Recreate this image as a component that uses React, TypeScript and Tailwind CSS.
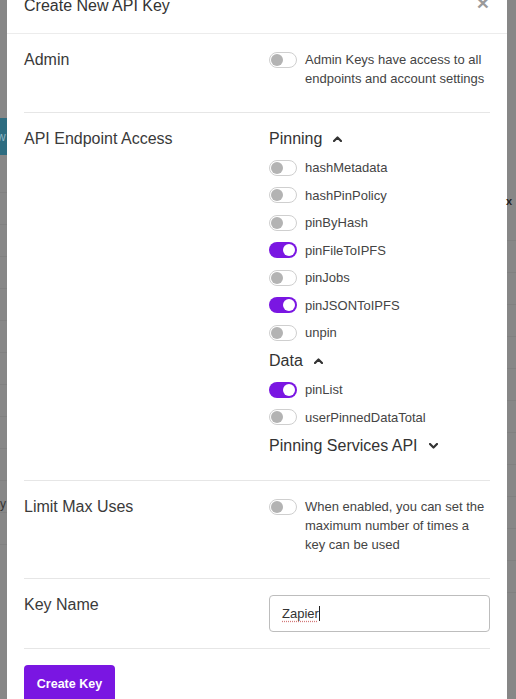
import React from "react";

function Toggle({ on }: { on?: boolean }) {
  return on ? (
    <div className="flex h-[16px] w-[28px] shrink-0 items-center justify-end rounded-full bg-[#7a16e2] pr-[2px]">
      <div className="h-[12px] w-[12px] rounded-full bg-white" />
    </div>
  ) : (
    <div className="flex h-[16px] w-[28px] shrink-0 items-center rounded-full border border-[#cfcfcf] bg-white pl-[1px]">
      <div className="h-[12px] w-[12px] rounded-full bg-[#b3b3b3]" />
    </div>
  );
}

function Chevron({ up }: { up?: boolean }) {
  return (
    <svg width="9" height="6" viewBox="0 0 9 6" className="shrink-0">
      <path
        d={up ? "M1 5 L4.5 1.5 L8 5" : "M1 1 L4.5 4.5 L8 1"}
        fill="none"
        stroke="#333"
        strokeWidth="2.2"
        strokeLinecap="round"
        strokeLinejoin="round"
      />
    </svg>
  );
}

function Heading({ title, up }: { title: string; up?: boolean }) {
  return (
    <div className="flex h-[29.5px] items-center gap-[11px] text-[16px] text-[#333]">
      <span>{title}</span>
      <Chevron up={up} />
    </div>
  );
}

function Item({ name, on }: { name: string; on?: boolean }) {
  return (
    <div className="flex h-[27.5px] items-center gap-[8px] text-[13px] text-[#444]">
      <Toggle on={on} />
      <span>{name}</span>
    </div>
  );
}

function StripLines() {
  return (
    <div className="flex flex-col">
      {Array.from({ length: 12 }).map((_, i) => (
        <div key={i} className="h-[32px] border-b border-[#808080]" />
      ))}
    </div>
  );
}

export default function App() {
  return (
    <div
      className="flex h-[699px] w-[516px] overflow-hidden bg-[#878787]"
      style={{ fontFamily: '"Liberation Sans", Arial, sans-serif' }}
    >
      {/* left backdrop strip */}
      <div className="flex w-[7px] shrink-0 flex-col">
        <div className="h-[118px]" />
        <div className="flex h-[37px] items-center bg-[#2d6c80] text-[12px] text-[#8fb6c4]">
          <span className="-ml-[3px]">w</span>
        </div>
        <div className="h-[6px]" />
        <StripLines />
        <div className="-mt-[50px] text-[12px] text-[#333]">y</div>
      </div>

      {/* modal */}
      <div className="w-[500px] shrink-0 bg-white">
        <div className="flex h-[34px] items-start justify-between border-b border-[#ececec] px-[17px]">
          <div className="-mt-[6px] text-[16px] leading-6 text-[#333]">Create New API Key</div>
          <div className="-mt-[9px] mr-[1px] text-[21px] font-bold leading-6 text-[#9a9a9a]">×</div>
        </div>

        <div className="px-[17px]">
          {/* Admin */}
          <div className="flex border-b border-[#e6e6e6] pb-[24.5px] pt-[13px]">
            <div className="mt-[1px] w-[245px] shrink-0 text-[16px] leading-6 text-[#3a3a3a]">Admin</div>
            <div className="flex flex-1 items-start gap-[8px]">
              <div className="mt-[5px]">
                <Toggle />
              </div>
              <div className="mt-[2.5px] text-[13px] leading-[19px] text-[#444]">
                Admin Keys have access to all endpoints and account settings
              </div>
            </div>
          </div>

          {/* API Endpoint Access */}
          <div className="flex border-b border-[#e6e6e6] pb-[19.5px] pt-[13px]">
            <div className="mt-[1px] w-[245px] shrink-0 text-[16px] leading-6 text-[#3a3a3a]">API Endpoint Access</div>
            <div className="-mt-[1.5px] flex flex-1 flex-col">
              <Heading title="Pinning" up />
              <Item name="hashMetadata" />
              <Item name="hashPinPolicy" />
              <Item name="pinByHash" />
              <Item name="pinFileToIPFS" on />
              <Item name="pinJobs" />
              <Item name="pinJSONToIPFS" on />
              <Item name="unpin" />
              <Heading title="Data" up />
              <Item name="pinList" on />
              <Item name="userPinnedDataTotal" />
              <Heading title="Pinning Services API" />
            </div>
          </div>

          {/* Limit Max Uses */}
          <div className="flex border-b border-[#e6e6e6] pb-[24.5px] pt-[13px]">
            <div className="mt-[1px] w-[245px] shrink-0 text-[16px] leading-6 text-[#3a3a3a]">Limit Max Uses</div>
            <div className="flex flex-1 items-start gap-[8px]">
              <div className="mt-[5px]">
                <Toggle />
              </div>
              <div className="mt-[2.5px] text-[13px] leading-[19px] text-[#444]">
                When enabled, you can set the maximum number of times a key can be used
              </div>
            </div>
          </div>

          {/* Key Name */}
          <div className="flex border-b border-[#e6e6e6] pb-[16px] pt-[13px]">
            <div className="mt-[1px] w-[245px] shrink-0 text-[16px] leading-6 text-[#3a3a3a]">Key Name</div>
            <div className="mt-[3px] flex h-[37px] flex-1 items-center rounded-[4px] border border-[#bdbdbd] px-[12px] text-[13px] text-[#333]">
              <span className="underline decoration-[#d47a7a] decoration-dotted underline-offset-[3px]">Zapier</span>
              <span className="inline-block h-[15px] w-px bg-[#222]" />
            </div>
          </div>

          {/* Footer */}
          <div className="pt-[16px]">
            <button className="flex h-[38px] w-[91px] items-center justify-center rounded-[4px] bg-[#7a16e2] text-[12.5px] font-bold text-white">
              Create Key
            </button>
          </div>
        </div>
      </div>

      {/* right backdrop strip */}
      <div className="flex flex-1 flex-col">
        <div className="h-[193px]" />
        <div className="-ml-[1px] text-[11px] font-bold leading-[16px] text-[#222]">x</div>
        <StripLines />
      </div>
    </div>
  );
}
